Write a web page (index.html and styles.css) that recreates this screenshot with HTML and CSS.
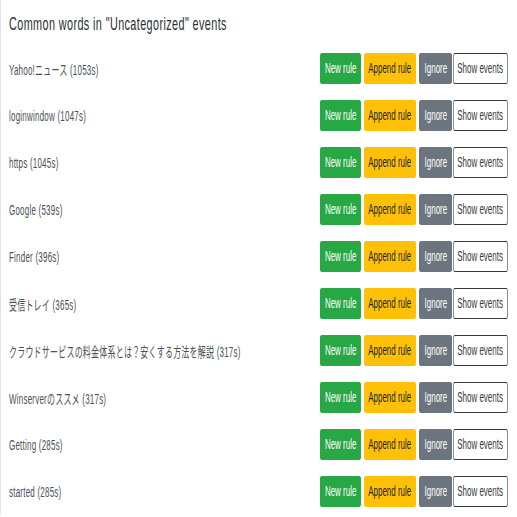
FILE: index.html
```html
<!DOCTYPE html>
<html lang="en">
<head>
  <meta charset="UTF-8">
  <title>Common words</title>
  <link rel="stylesheet" href="styles.css">
</head>
<body>
  <div class="card">
    <h5 class="card-title"><span class="squeeze">Common words in "Uncategorized" events</span></h5>
    <ul class="word-list">
      <li class="word-row">
        <div class="word"><span class="squeeze">Yahoo!ニュース (1053s)</span></div>
        <div class="actions">
          <button class="btn btn-new"><span class="squeeze">New rule</span></button>
          <button class="btn btn-append"><span class="squeeze">Append rule</span></button>
          <button class="btn btn-ignore"><span class="squeeze">Ignore</span></button>
          <button class="btn btn-show"><span class="squeeze">Show events</span></button>
        </div>
      </li>
      <li class="word-row">
        <div class="word"><span class="squeeze">loginwindow (1047s)</span></div>
        <div class="actions">
          <button class="btn btn-new"><span class="squeeze">New rule</span></button>
          <button class="btn btn-append"><span class="squeeze">Append rule</span></button>
          <button class="btn btn-ignore"><span class="squeeze">Ignore</span></button>
          <button class="btn btn-show"><span class="squeeze">Show events</span></button>
        </div>
      </li>
      <li class="word-row">
        <div class="word"><span class="squeeze">https (1045s)</span></div>
        <div class="actions">
          <button class="btn btn-new"><span class="squeeze">New rule</span></button>
          <button class="btn btn-append"><span class="squeeze">Append rule</span></button>
          <button class="btn btn-ignore"><span class="squeeze">Ignore</span></button>
          <button class="btn btn-show"><span class="squeeze">Show events</span></button>
        </div>
      </li>
      <li class="word-row">
        <div class="word"><span class="squeeze">Google (539s)</span></div>
        <div class="actions">
          <button class="btn btn-new"><span class="squeeze">New rule</span></button>
          <button class="btn btn-append"><span class="squeeze">Append rule</span></button>
          <button class="btn btn-ignore"><span class="squeeze">Ignore</span></button>
          <button class="btn btn-show"><span class="squeeze">Show events</span></button>
        </div>
      </li>
      <li class="word-row">
        <div class="word"><span class="squeeze">Finder (396s)</span></div>
        <div class="actions">
          <button class="btn btn-new"><span class="squeeze">New rule</span></button>
          <button class="btn btn-append"><span class="squeeze">Append rule</span></button>
          <button class="btn btn-ignore"><span class="squeeze">Ignore</span></button>
          <button class="btn btn-show"><span class="squeeze">Show events</span></button>
        </div>
      </li>
      <li class="word-row">
        <div class="word"><span class="squeeze">受信トレイ (365s)</span></div>
        <div class="actions">
          <button class="btn btn-new"><span class="squeeze">New rule</span></button>
          <button class="btn btn-append"><span class="squeeze">Append rule</span></button>
          <button class="btn btn-ignore"><span class="squeeze">Ignore</span></button>
          <button class="btn btn-show"><span class="squeeze">Show events</span></button>
        </div>
      </li>
      <li class="word-row">
        <div class="word"><span class="squeeze">クラウドサービスの料金体系とは？安くする方法を解説 (317s)</span></div>
        <div class="actions">
          <button class="btn btn-new"><span class="squeeze">New rule</span></button>
          <button class="btn btn-append"><span class="squeeze">Append rule</span></button>
          <button class="btn btn-ignore"><span class="squeeze">Ignore</span></button>
          <button class="btn btn-show"><span class="squeeze">Show events</span></button>
        </div>
      </li>
      <li class="word-row">
        <div class="word"><span class="squeeze">Winserverのススメ (317s)</span></div>
        <div class="actions">
          <button class="btn btn-new"><span class="squeeze">New rule</span></button>
          <button class="btn btn-append"><span class="squeeze">Append rule</span></button>
          <button class="btn btn-ignore"><span class="squeeze">Ignore</span></button>
          <button class="btn btn-show"><span class="squeeze">Show events</span></button>
        </div>
      </li>
      <li class="word-row">
        <div class="word"><span class="squeeze">Getting (285s)</span></div>
        <div class="actions">
          <button class="btn btn-new"><span class="squeeze">New rule</span></button>
          <button class="btn btn-append"><span class="squeeze">Append rule</span></button>
          <button class="btn btn-ignore"><span class="squeeze">Ignore</span></button>
          <button class="btn btn-show"><span class="squeeze">Show events</span></button>
        </div>
      </li>
      <li class="word-row">
        <div class="word"><span class="squeeze">started (285s)</span></div>
        <div class="actions">
          <button class="btn btn-new"><span class="squeeze">New rule</span></button>
          <button class="btn btn-append"><span class="squeeze">Append rule</span></button>
          <button class="btn btn-ignore"><span class="squeeze">Ignore</span></button>
          <button class="btn btn-show"><span class="squeeze">Show events</span></button>
        </div>
      </li>
    </ul>
  </div>
</body>
</html>
```

FILE: styles.css
```css
html,
body {
  margin: 0;
  overflow: hidden;
}

body {
  font-family: "Liberation Sans", "Noto Sans CJK JP", sans-serif;
  color: #212529;
  background: #fff;
}

.card {
  border-left: 1px solid #e4e5e6;
  padding: 12px 9px 0 8px;
}

/* Text is drawn at full size and squeezed sideways to the narrow look */
.squeeze {
  display: inline-block;
  white-space: nowrap;
  transform: scaleX(0.57);
}

.card-title {
  margin: 0 0 10px;
  font-size: 19px;
  font-weight: 400;
  line-height: 23px;
  letter-spacing: 0.7px;
  color: #2b2f33;
}

.card-title .squeeze,
.word .squeeze {
  transform-origin: 0 50%;
}

.word-list {
  list-style: none;
  margin: 0;
  padding: 0;
}

.word-row {
  display: flex;
  align-items: center;
  padding: 8px 0;
}

.word {
  flex: 1;
  min-width: 0;
  font-size: 14px;
  letter-spacing: 0.4px;
  color: #495057;
}

.actions {
  display: flex;
  gap: 3px;
}

.btn {
  display: flex;
  justify-content: center;
  height: 31px;
  padding: 4px 0;
  font-family: inherit;
  font-size: 14px;
  line-height: 21px;
  border: 1px solid transparent;
  border-radius: 2px / 3px;
  cursor: pointer;
}

.btn-new {
  width: 41px;
  background: #28a745;
  border-color: #28a745;
  color: #fff;
}

.btn-append {
  width: 52px;
  background: #ffc107;
  border-color: #ffc107;
  color: #212529;
}

.btn-ignore {
  width: 33px;
  background: #6c757d;
  border-color: #6c757d;
  color: #fff;
}

.btn-show {
  width: 55px;
  margin-left: -2px;
  background: #fff;
  border-color: #343a40 #8d9196;
  color: #343a40;
}
```
